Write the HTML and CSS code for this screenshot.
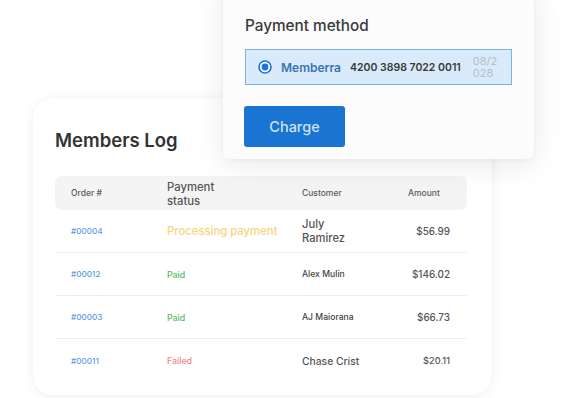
FILE: index.html
```html
<!DOCTYPE html>
<html>
<head>
<meta charset="utf-8">
<link rel="stylesheet" href="styles.css">
</head>
<body>
<div class="stage">
  <section class="log-card">
    <h1 class="log-title">Members Log</h1>
    <div class="table">
      <div class="row head">
        <div class="c c1 h-small">Order #</div>
        <div class="c c2 h-big">Payment status</div>
        <div class="c c3 h-small">Customer</div>
        <div class="c c4 h-small h-amount">Amount</div>
      </div>
      <div class="row">
        <div class="c c1 order">#00004</div>
        <div class="c c2 st-proc">Processing payment</div>
        <div class="c c3 cust-big narrow">July Ramirez</div>
        <div class="c c4 amt">$56.99</div>
      </div>
      <div class="row">
        <div class="c c1 order">#00012</div>
        <div class="c c2 st-paid">Paid</div>
        <div class="c c3 cust-small">Alex Mulin</div>
        <div class="c c4 amt">$146.02</div>
      </div>
      <div class="row">
        <div class="c c1 order">#00003</div>
        <div class="c c2 st-paid">Paid</div>
        <div class="c c3 cust-small">AJ Maiorana</div>
        <div class="c c4 amt">$66.73</div>
      </div>
      <div class="row last">
        <div class="c c1 order">#00011</div>
        <div class="c c2 st-fail">Failed</div>
        <div class="c c3 cust-mid">Chase Crist</div>
        <div class="c c4 amt amt-small">$20.11</div>
      </div>
    </div>
  </section>

  <section class="pay-card">
    <h2 class="pay-title">Payment method</h2>
    <div class="option">
      <svg class="radio" width="14" height="14" viewBox="0 0 14 14">
        <circle cx="7" cy="7" r="6" fill="#fff" stroke="#1a73e0" stroke-width="1.6"/>
        <circle cx="7" cy="7" r="3.4" fill="#1a73e0"/>
      </svg>
      <span class="brand">Memberra</span>
      <span class="number">4200 3898 7022 0011</span>
      <span class="exp">08/2028</span>
    </div>
    <button class="charge">Charge</button>
  </section>
</div>
</body>
</html>
```

FILE: styles.css
```css
* { box-sizing: border-box; }
html, body {
  margin: 0;
  padding: 0;
  background: #ffffff;
}
body {
  width: 568px;
  height: 398px;
  overflow: hidden;
  font-family: Inter, "Noto Sans", sans-serif;
  color: #3a3a3a;
}
.stage {
  position: relative;
  width: 568px;
  height: 398px;
  padding: 98px 0 0 33px;
}
.log-card {
  width: 459px;
  height: 297px;
  background: #fff;
  border-radius: 20px;
  box-shadow: 0 2px 14px rgba(0, 0, 0, 0.06), 0 0 3px rgba(0, 0, 0, 0.03);
  padding: 30px 24px 0 22px;
}
.log-title {
  margin: 0;
  font-size: 18.5px;
  line-height: 24px;
  font-weight: 600;
  color: #333;
}
.table {
  margin-top: 24px;
  width: 412px;
}
.row {
  display: grid;
  grid-template-columns: 112px 135px 100px 1fr;
  align-items: center;
  height: 43px;
  border-bottom: 1px solid #ececec;
}
.row.last { border-bottom: none; }
.row.head {
  height: 34px;
  background: #f4f4f5;
  border-radius: 7px;
  border-bottom: none;
}
.c1 { padding-left: 16px; }
.c4 { text-align: right; padding-right: 17px; }
.h-small {
  font-size: 8.5px;
  color: #5a5a5a;
  font-weight: 500;
}
.h-amount { text-align: left; padding-left: 6px; padding-right: 0; }
.h-big {
  font-size: 11.3px;
  line-height: 14px;
  color: #555;
  font-weight: 500;
  width: 60px;
  padding-top: 1px;
}
.order {
  font-size: 8.2px;
  color: #5c9ee0;
  font-weight: 500;
}
.st-proc {
  font-size: 11.3px;
  color: #f7d57f;
  font-weight: 500;
  white-space: nowrap;
}
.st-paid {
  font-size: 8.8px;
  color: #53bb63;
  font-weight: 500;
}
.st-fail {
  font-size: 8.8px;
  color: #f08585;
  font-weight: 500;
}
.cust-big {
  font-size: 11.2px;
  line-height: 14px;
  color: #555;
  font-weight: 500;
}
.cust-mid {
  font-size: 10.3px;
  color: #555;
  font-weight: 500;
}
.narrow { width: 60px; }
.cust-small {
  font-size: 8.6px;
  color: #444;
  font-weight: 500;
}
.amt {
  font-size: 9.9px;
  color: #555;
  font-weight: 500;
}
.amt-small { font-size: 9.2px; }

.pay-card {
  position: absolute;
  left: 223px;
  top: -20px;
  width: 311px;
  height: 179px;
  background: #fcfcfc;
  border-radius: 6px;
  box-shadow: 0 6px 30px rgba(0, 0, 0, 0.09), 0 1px 4px rgba(0, 0, 0, 0.04);
  padding: 36px 22px 0 22px;
}
.pay-title {
  margin: 0;
  font-size: 15.3px;
  line-height: 19px;
  font-weight: 500;
  color: #3a3a3a;
}
.option {
  margin-top: 14px;
  width: 267px;
  height: 36px;
  background: #d9eafb;
  border: 1px solid #7db2e6;
  display: flex;
  align-items: center;
  padding-left: 12px;
}
.radio { flex: none; }
.brand {
  margin-left: 9px;
  font-size: 12px;
  font-weight: 600;
  color: #3874b4;
}
.number {
  margin-left: 9px;
  font-size: 10.5px;
  font-weight: 600;
  color: #3a3a3a;
  white-space: nowrap;
}
.exp {
  margin-left: 12px;
  width: 26px;
  font-size: 11px;
  line-height: 12px;
  color: #b7bec7;
  word-break: break-all;
}
.charge {
  display: block;
  margin: 21px 0 0 -1px;
  width: 101px;
  height: 41px;
  border: none;
  border-radius: 3px;
  background: #1a75d2;
  color: #cfe2f6;
  font-family: Inter, "Noto Sans", sans-serif;
  font-size: 14.5px;
  font-weight: 500;
  padding: 0;
}
```
